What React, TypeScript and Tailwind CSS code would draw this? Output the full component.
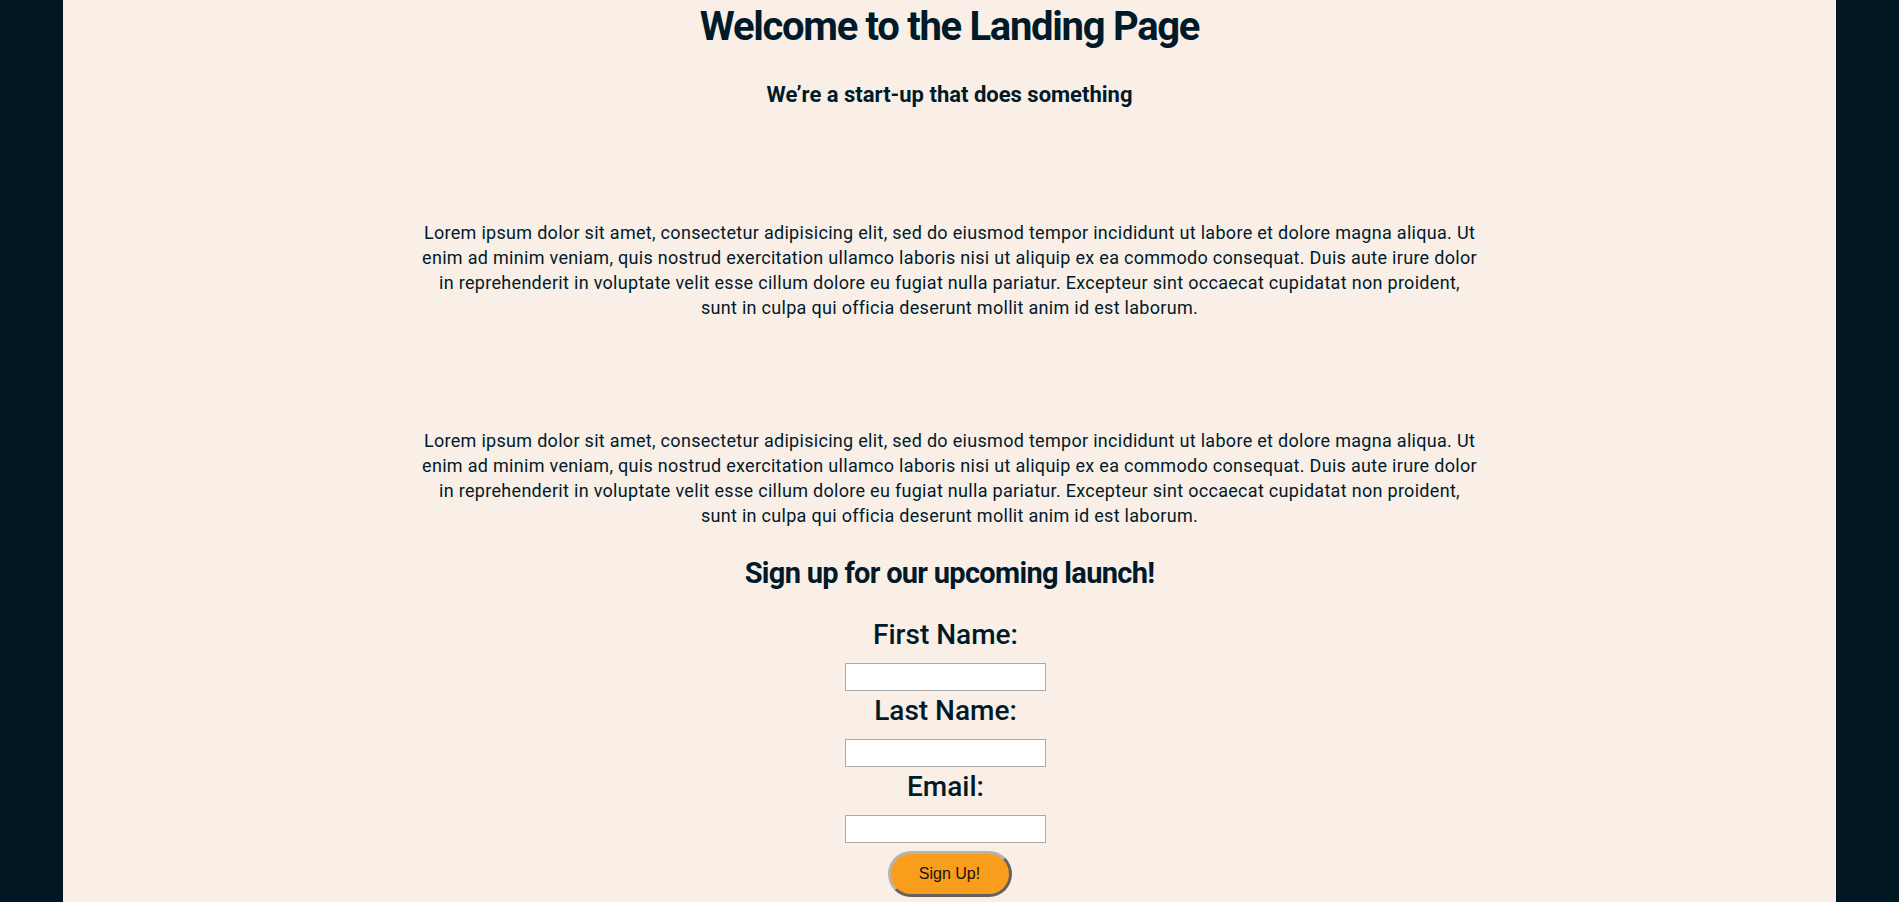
export default function App() {
  const lorem =
    'Lorem ipsum dolor sit amet, consectetur adipisicing elit, sed do eiusmod tempor incididunt ut labore et dolore magna aliqua. Ut enim ad minim veniam, quis nostrud exercitation ullamco laboris nisi ut aliquip ex ea commodo consequat. Duis aute irure dolor in reprehenderit in voluptate velit esse cillum dolore eu fugiat nulla pariatur. Excepteur sint occaecat cupidatat non proident, sunt in culpa qui officia deserunt mollit anim id est laborum.';

  return (
    <div className="min-h-screen bg-[#011824] px-[63px] font-['Roboto',sans-serif] text-[#011a2a]">
      <div className="min-h-screen bg-[#f9efe6] flex flex-col items-center text-center">
        {/* header */}
        <h1 className="text-[40px] leading-[46px] font-bold tracking-[-1.3px] mt-[4px]">Welcome to the Landing Page</h1>
        <h3 className="text-[22px] leading-[25px] font-bold mt-[32px]">We&rsquo;re a start-up that does something</h3>

        {/* content */}
        <p className="max-w-[1058px] text-[18px] leading-[25px] tracking-[0.3px] mt-[113px]">{lorem}</p>
        <p className="max-w-[1058px] text-[18px] leading-[25px] tracking-[0.3px] mt-[108px]">{lorem}</p>

        {/* sign up */}
        <h2 className="text-[29px] leading-[36px] font-bold tracking-[-0.7px] mt-[27px]">Sign up for our upcoming launch!</h2>
        <form className="flex flex-col items-center mt-[28px]" onSubmit={(e) => e.preventDefault()}>
          <label className="text-[28px] leading-[32px] font-medium mr-[8px]">First Name:</label>
          <input className="w-[201px] h-[28px] mt-[12px] mr-[8px] bg-white border border-[#a9a9a9]" />
          <label className="text-[28px] leading-[32px] font-medium mt-[4px] mr-[8px]">Last Name:</label>
          <input className="w-[201px] h-[28px] mt-[12px] mr-[8px] bg-white border border-[#a9a9a9]" />
          <label className="text-[28px] leading-[32px] font-medium mt-[4px] mr-[8px]">Email:</label>
          <input className="w-[201px] h-[28px] mt-[12px] mr-[8px] bg-white border border-[#a9a9a9]" />
          <button
            type="submit"
            className="w-[124px] h-[46px] mt-[8px] rounded-full bg-[#f99d1c] border-[3px] [border-style:outset] border-[#b9b2aa] font-['Liberation_Sans',Arial,sans-serif] text-[16px] text-[#1b1208]"
          >
            Sign Up!
          </button>
        </form>
      </div>
    </div>
  );
}
